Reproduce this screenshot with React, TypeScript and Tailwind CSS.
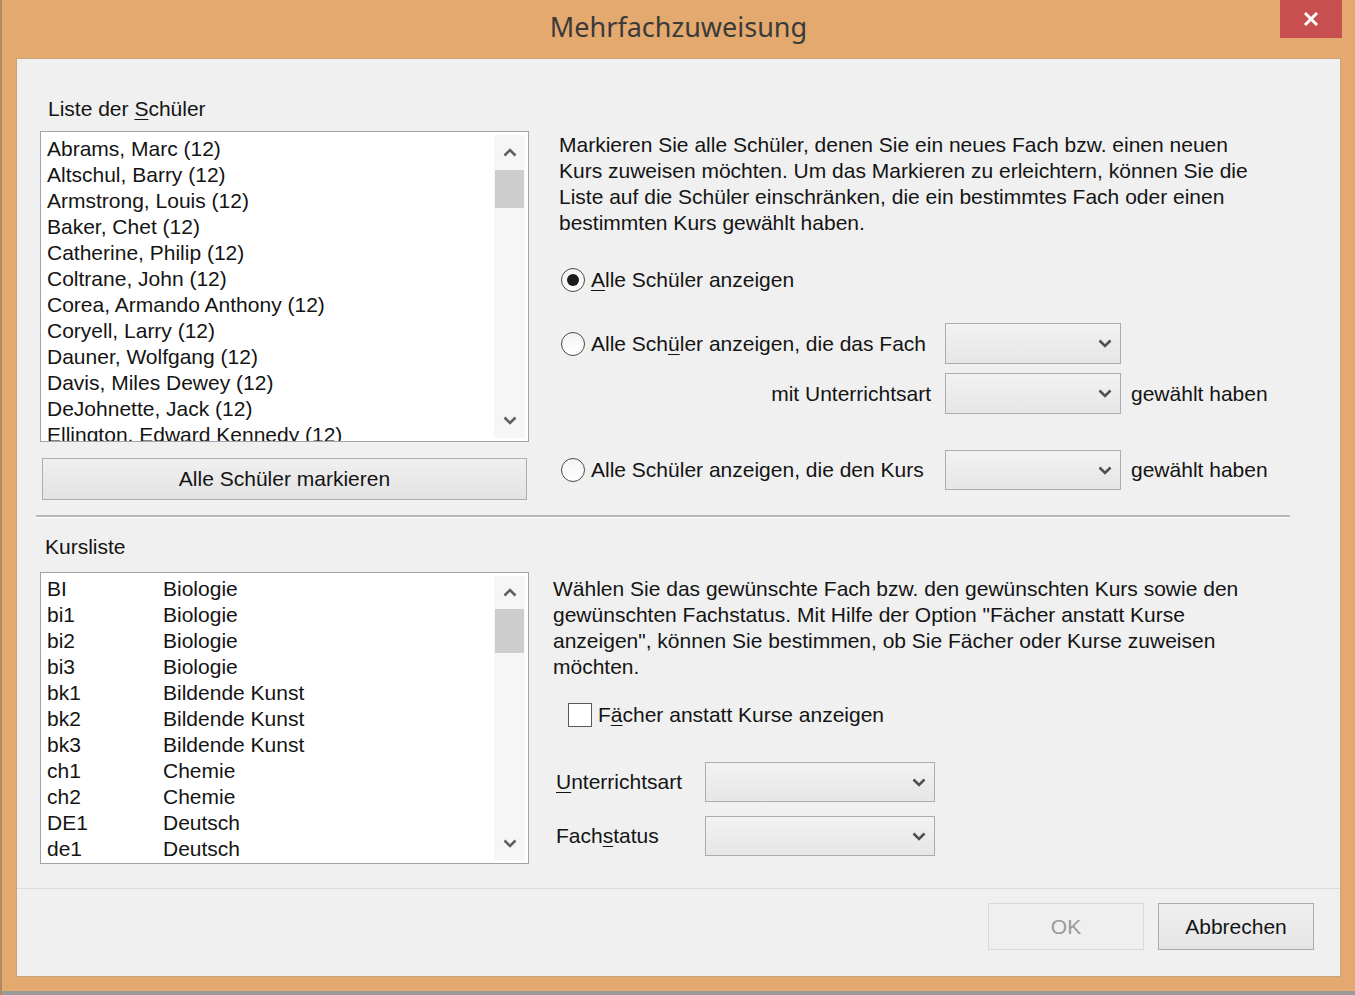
import React from 'react';

const students = [
  'Abrams, Marc (12)',
  'Altschul, Barry (12)',
  'Armstrong, Louis (12)',
  'Baker, Chet (12)',
  'Catherine, Philip (12)',
  'Coltrane, John (12)',
  'Corea, Armando Anthony (12)',
  'Coryell, Larry (12)',
  'Dauner, Wolfgang (12)',
  'Davis, Miles Dewey (12)',
  'DeJohnette, Jack (12)',
  'Ellington, Edward Kennedy (12)',
];

const courses: [string, string][] = [
  ['BI', 'Biologie'],
  ['bi1', 'Biologie'],
  ['bi2', 'Biologie'],
  ['bi3', 'Biologie'],
  ['bk1', 'Bildende Kunst'],
  ['bk2', 'Bildende Kunst'],
  ['bk3', 'Bildende Kunst'],
  ['ch1', 'Chemie'],
  ['ch2', 'Chemie'],
  ['DE1', 'Deutsch'],
  ['de1', 'Deutsch'],
];

const Chevron = ({ up = false, color = '#606060' }: { up?: boolean; color?: string }) => (
  <svg width="14" height="9" viewBox="0 0 14 9">
    <path
      d={up ? 'M1.5 7.5 L7 2 L12.5 7.5' : 'M1.5 1.5 L7 7 L12.5 1.5'}
      fill="none"
      stroke={color}
      strokeWidth="2.6"
    />
  </svg>
);

const U = ({ children }: { children: React.ReactNode }) => (
  <span className="underline underline-offset-[3px] decoration-1">{children}</span>
);

const Scrollbar = ({ btn, thumb }: { btn: number; thumb: number }) => (
  <div className="w-[31px] my-[3px] mr-[3px] bg-[#f6f6f6] flex flex-col">
    <div className="flex items-center justify-center" style={{ height: btn }}>
      <Chevron up />
    </div>
    <div className="bg-[#cdcdcd] mx-[1px]" style={{ height: thumb }} />
    <div className="flex-1" />
    <div className="flex items-center justify-center" style={{ height: btn }}>
      <Chevron />
    </div>
  </div>
);

const Dropdown = ({ w, h }: { w: number; h: number }) => (
  <div
    className="border border-[#acacac] bg-gradient-to-b from-[#f2f2f2] to-[#e6e6e6] flex items-center justify-end pr-[8px]"
    style={{ width: w, height: h }}
  >
    <Chevron color="#505050" />
  </div>
);

const Radio = ({ checked = false }: { checked?: boolean }) => (
  <div className="w-[24px] h-[24px] rounded-full border-[1.5px] border-[#4a4a4a] bg-gradient-to-b from-[#f4f4f4] to-white flex items-center justify-center shrink-0">
    {checked && <div className="w-[12px] h-[12px] rounded-full bg-[#1a1a1a]" />}
  </div>
);

export default function App() {
  return (
    <div
      className="w-[1355px] h-[995px] bg-[#e4a96f] flex flex-col border-l-2 border-l-[#b08a62] overflow-hidden text-[#141414]"
      style={{ fontFamily: '"Liberation Sans", Arial, sans-serif' }}
    >
      {/* Title bar */}
      <div className="relative h-[58px] flex items-center justify-center shrink-0">
        <span className="text-[27px] text-[#3a3a3a] pb-[3px]" style={{ fontFamily: '"Noto Sans", "Open Sans", sans-serif' }}>
          Mehrfachzuweisung
        </span>
        <div className="absolute top-0 right-[13px] w-[62px] h-[38px] bg-[#c84f4f] flex items-center justify-center">
          <svg width="16" height="16" viewBox="0 0 16 16">
            <path d="M2 2 L14 14 M14 2 L2 14" stroke="white" strokeWidth="3" />
          </svg>
        </div>
      </div>

      {/* Client area */}
      <div className="ml-[14px] w-[1325px] h-[919px] bg-[#f0f0f0] border border-[#c9a47b] flex flex-col text-[21px] leading-[26px] shrink-0">
        <div className="h-[829px] flex flex-col">
          {/* Upper section */}
          <div className="flex pt-[37px]">
            <div className="ml-[23px] w-[489px] flex flex-col">
              <div className="pl-[8px] h-[26px]">
                Liste der <U>S</U>chüler
              </div>
              <div className="mt-[9px] h-[311px] bg-white border border-[#a0a3a8] flex">
                <div className="flex-1 pt-[4px] pl-[6px] overflow-hidden">
                  {students.map((s) => (
                    <div key={s} className="h-[26px] whitespace-nowrap">
                      {s}
                    </div>
                  ))}
                </div>
                <Scrollbar btn={35} thumb={38} />
              </div>
              <div className="mt-[16px] mx-[2px] h-[42px] border border-[#adadad] bg-gradient-to-b from-[#f0f0f0] to-[#e3e3e3] flex items-center justify-center">
                Alle Schüler markieren
              </div>
            </div>

            <div className="ml-[30px] pt-[36px] flex flex-col">
              <p>
                Markieren Sie alle Schüler, denen Sie ein neues Fach bzw. einen neuen
                <br />
                Kurs zuweisen möchten. Um das Markieren zu erleichtern, können Sie die
                <br />
                Liste auf die Schüler einschränken, die ein bestimmtes Fach oder einen
                <br />
                bestimmten Kurs gewählt haben.
              </p>
              <div className="mt-[31px] h-[26px] flex items-center gap-[6px] pl-[2px]">
                <Radio checked />
                <span>
                  <U>A</U>lle Schüler anzeigen
                </span>
              </div>
              <div className="mt-[30px] h-[41px] flex items-center">
                <div className="w-[386px] flex items-center gap-[6px] pl-[2px]">
                  <Radio />
                  <span>
                    Alle Sch<U>ü</U>ler anzeigen, die das Fach
                  </span>
                </div>
                <Dropdown w={176} h={41} />
              </div>
              <div className="mt-[9px] h-[41px] flex items-center">
                <div className="w-[372px] text-right">mit Unterrichtsart</div>
                <div className="ml-[14px]">
                  <Dropdown w={176} h={41} />
                </div>
                <span className="ml-[10px]">gewählt haben</span>
              </div>
              <div className="mt-[36px] h-[40px] flex items-center">
                <div className="w-[386px] flex items-center gap-[6px] pl-[2px]">
                  <Radio />
                  <span>Alle Schüler anzeigen, die den Kurs</span>
                </div>
                <Dropdown w={176} h={40} />
                <span className="ml-[10px]">gewählt haben</span>
              </div>
            </div>
          </div>

          {/* Separator */}
          <div className="mt-[15px] ml-[19px] w-[1254px] h-[3px] border-t-2 border-[#b8b8b8] border-b border-b-white" />

          {/* Lower section */}
          <div className="flex">
            <div className="ml-[23px] w-[489px] flex flex-col">
              <div className="mt-[16px] pl-[5px] h-[26px]">Kursliste</div>
              <div className="mt-[12px] h-[292px] bg-white border border-[#a0a3a8] flex">
                <div className="flex-1 pt-[3px] pl-[6px] overflow-hidden">
                  {courses.map(([code, name]) => (
                    <div key={code} className="h-[26px] flex whitespace-nowrap">
                      <span className="w-[116px]">{code}</span>
                      <span>{name}</span>
                    </div>
                  ))}
                </div>
                <Scrollbar btn={33} thumb={44} />
              </div>
            </div>

            <div className="ml-[24px] pt-[58px] flex flex-col">
              <p>
                Wählen Sie das gewünschte Fach bzw. den gewünschten Kurs sowie den
                <br />
                gewünschten Fachstatus. Mit Hilfe der Option "Fächer anstatt Kurse
                <br />
                anzeigen", können Sie bestimmen, ob Sie Fächer oder Kurse zuweisen
                <br />
                möchten.
              </p>
              <div className="mt-[22px] h-[26px] flex items-center gap-[6px] pl-[15px]">
                <div className="w-[24px] h-[24px] border-[1.5px] border-[#5a5a5a] bg-white" />
                <span>
                  F<U>ä</U>cher anstatt Kurse anzeigen
                </span>
              </div>
              <div className="mt-[34px] h-[40px] flex items-center">
                <div className="w-[152px] pl-[3px]">
                  <U>U</U>nterrichtsart
                </div>
                <Dropdown w={230} h={40} />
              </div>
              <div className="mt-[14px] h-[40px] flex items-center">
                <div className="w-[152px] pl-[3px]">
                  Fach<U>s</U>tatus
                </div>
                <Dropdown w={230} h={40} />
              </div>
            </div>
          </div>
        </div>

        {/* Footer */}
        <div className="h-[1px] bg-[#dadada]" />
        <div className="flex-1 flex justify-end items-start pt-[14px] pr-[26px] gap-[14px]">
          <div className="w-[156px] h-[47px] border border-[#d9d9d9] bg-[#efefef] text-[#9a9a9a] flex items-center justify-center">
            OK
          </div>
          <div className="w-[156px] h-[47px] border border-[#acacac] bg-gradient-to-b from-[#f0f0f0] to-[#e4e4e4] flex items-center justify-center">
            Abbrechen
          </div>
        </div>
      </div>
      <div className="flex-1" />
      <div className="h-[4px] bg-[#9a9a9a] shrink-0" />
    </div>
  );
}
